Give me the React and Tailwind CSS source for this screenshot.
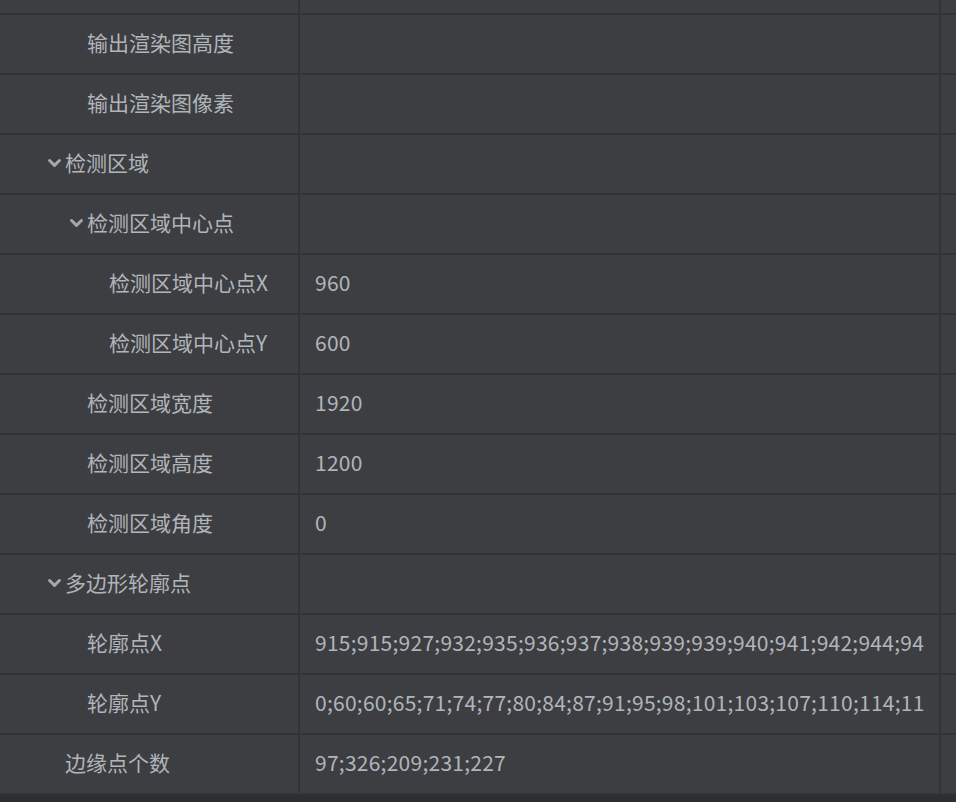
const rows = [
  { label: "输出渲染图高度", level: 1 },
  { label: "输出渲染图像素", level: 1 },
  { label: "检测区域", level: 0, group: true },
  { label: "检测区域中心点", level: 1, group: true },
  { label: "检测区域中心点X", level: 2, value: "960" },
  { label: "检测区域中心点Y", level: 2, value: "600" },
  { label: "检测区域宽度", level: 1, value: "1920" },
  { label: "检测区域高度", level: 1, value: "1200" },
  { label: "检测区域角度", level: 1, value: "0" },
  { label: "多边形轮廓点", level: 0, group: true },
  {
    label: "轮廓点X",
    level: 1,
    value: "915;915;927;932;935;936;937;938;939;939;940;941;942;944;945;946;947;948;950;951",
  },
  {
    label: "轮廓点Y",
    level: 1,
    value: "0;60;60;65;71;74;77;80;84;87;91;95;98;101;103;107;110;114;117;120;124",
  },
  { label: "边缘点个数", level: 0, value: "97;326;209;231;227" },
];

const indent = ["pl-[65px]", "pl-[87px]", "pl-[109px]"];

function Chevron() {
  return (
    <svg
      width="13"
      height="9"
      viewBox="0 0 13 9"
      className="absolute left-[-17px] top-1/2 -translate-y-[45%]"
    >
      <path d="M1.6 1.6 L6.5 6.4 L11.4 1.6" fill="none" stroke="#a4a8ac" strokeWidth="3" strokeLinecap="round" strokeLinejoin="round" />
    </svg>
  );
}

function Row({ row }) {
  return (
    <div className="flex h-[60px] border-b-2 border-[#323337]">
      <div className={`flex w-[300px] shrink-0 items-center border-r-2 border-[#323337] pb-[2px] ${indent[row.level]}`}>
        <span className="relative whitespace-nowrap leading-normal">
          {row.group && <Chevron />}
          {row.label}
        </span>
      </div>
      <div className="flex w-[641px] shrink-0 items-center overflow-hidden border-r-2 border-[#323337] pb-[2px] pl-[15px] pr-[15px]">
        <span className="block overflow-hidden whitespace-nowrap leading-normal tracking-[0.25px]">{row.value}</span>
      </div>
      <div className="flex-1" />
    </div>
  );
}

export default function App() {
  return (
    <div
      className="h-[802px] w-[956px] overflow-hidden bg-[#2d2e32] text-[21px] leading-none text-[#b0b5ba]"
      style={{ fontFamily: '"Noto Sans CJK SC", "Noto Sans", sans-serif' }}
    >
      <div className="bg-[#3d3e42]">
        <div className="flex h-[15px] border-b-2 border-[#323337]">
          <div className="w-[300px] border-r-2 border-[#323337]" />
          <div className="w-[641px] border-r-2 border-[#323337]" />
        </div>
        {rows.map((row) => (
          <Row key={row.label} row={row} />
        ))}
      </div>
    </div>
  );
}
